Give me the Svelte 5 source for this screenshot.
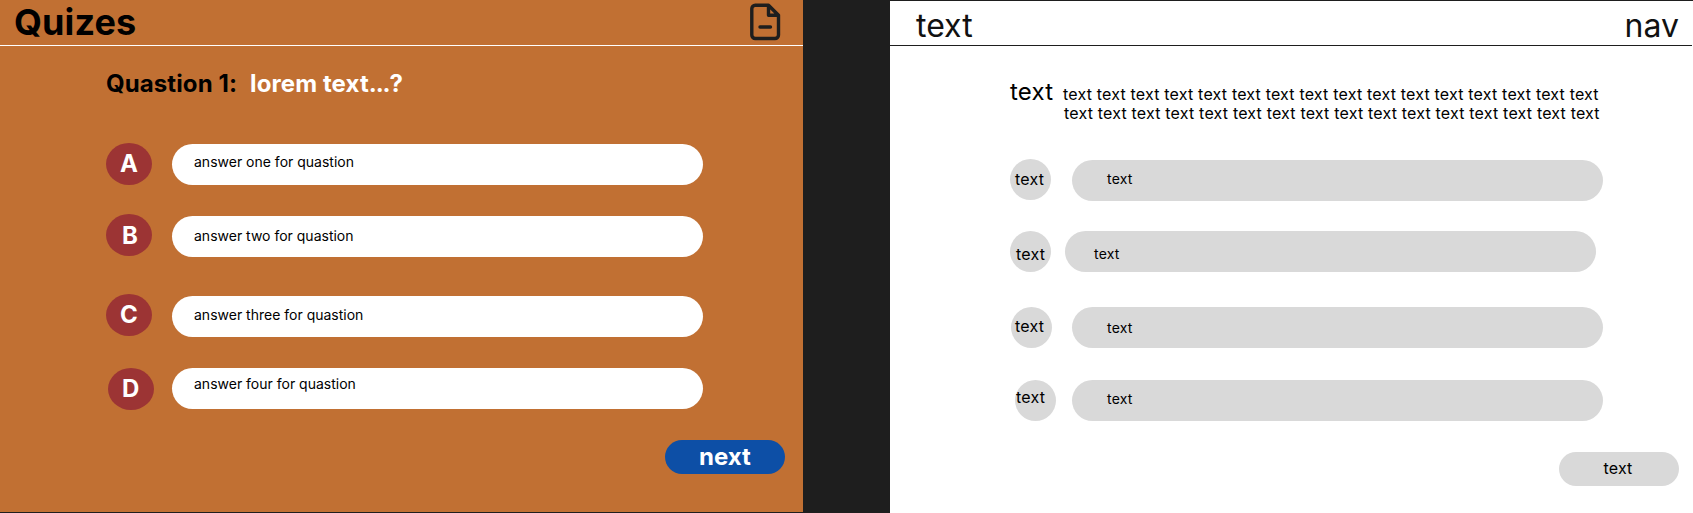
<script>
  const answers = [
    { letter: 'A', label: 'answer one for quastion' },
    { letter: 'B', label: 'answer two for quastion' },
    { letter: 'C', label: 'answer three for quastion' },
    { letter: 'D', label: 'answer four for quastion' }
  ];
  const line = Array(16).fill('text').join(' ');
</script>

<main>
  <section class="quiz">
    <header>
      <h1>Quizes</h1>
      <svg width="34" height="40" viewBox="0 0 34 40" fill="none" stroke="#1e1e1e" stroke-width="3.4" stroke-linecap="round" stroke-linejoin="round">
        <path d="M20.5 3.3H7.3a3.5 3.5 0 0 0-3.5 3.5V33a3.5 3.5 0 0 0 3.5 3.5H27A3.5 3.5 0 0 0 30.5 33V13.3L20.5 3.3V13.3H30.5M12 25H22.5" />
      </svg>
    </header>
    <h2><span>Quastion 1:</span><b>lorem text<span class="dots">...</span>?</b></h2>
    <ul>
      {#each answers as a}
        <li><span class="dot">{a.letter}</span><span class="pill">{a.label}</span></li>
      {/each}
    </ul>
    <button>next</button>
  </section>

  <section class="wire">
    <header><span>text</span><nav>nav</nav></header>
    <div class="ask">
      <span class="lead">text</span>
      <p>{line}<br /><span class="second">{line}</span></p>
    </div>
    <ul>
      {#each answers as a}
        <li><span class="dot">text</span><span class="pill">text</span></li>
      {/each}
    </ul>
    <button>text</button>
  </section>
</main>

<style>
  :global(body) { margin: 0; background: #1e1e1e; }
  main {
    display: flex;
    justify-content: space-between;
    height: 513px;
    overflow: hidden;
    font-family: Inter, sans-serif;
    color: #000;
  }
  section, header, li, .dot, .pill, button { box-sizing: border-box; }
  section { width: 803px; display: flex; flex-direction: column; }
  header { display: flex; justify-content: space-between; flex: none; }
  h1, h2, p, ul { margin: 0; padding: 0; }
  ul { list-style: none; }
  li { display: flex; align-items: flex-start; height: 41px; }
  .dot, .pill { flex: none; white-space: nowrap; }
  .pill { width: 531px; height: 41px; border-radius: 20.5px; font-size: 14px; line-height: 17px; }
  button {
    width: 120px; height: 34px; border: 0; border-radius: 17px; padding: 0;
    font-family: inherit; align-self: flex-end; flex: none;
  }

  .quiz { height: 512px; background: #c17033; }
  .quiz header { height: 46px; border-bottom: 1px solid #fff; padding: 0 21px 0 14px; }
  h1 { font-size: 36px; line-height: 44px; font-weight: 700; letter-spacing: 0.1px; }
  header svg { margin-top: 2px; }
  h2 { display: flex; gap: 13px; margin: 23px 0 0 106px; height: 29px; font-size: 24px; line-height: 29px; font-weight: 700; letter-spacing: 0.1px; }
  h2 b { color: #fff; font-weight: 700; }
  .dots { letter-spacing: -1.1px; }
  .quiz ul { margin: 46px 0 0 106px; }
  .quiz .dot {
    width: 46px; height: 42px; border-radius: 50%; background: #9c3434; color: #fff;
    font-size: 24px; line-height: 29px; font-weight: 700; padding: 6px 0 0 14px; margin-top: -1px;
  }
  .quiz .pill { background: #fff; margin-left: 20px; padding: 9px 0 0 22px; }
  .quiz li:nth-child(2) { margin-top: 31px; }
  .quiz li:nth-child(3) { margin-top: 39px; }
  .quiz li:nth-child(4) { margin-top: 31px; }
  .quiz li:nth-child(2) .dot { margin-top: -2px; padding: 7px 0 0 16px; }
  .quiz li:nth-child(3) .dot { margin-top: -2px; }
  .quiz li:nth-child(4) .dot { margin: 0 0 0 2px; }
  .quiz li:nth-child(2) .pill { padding-top: 11px; }
  .quiz li:nth-child(3) .pill { padding-top: 10px; }
  .quiz li:nth-child(4) .pill { margin-left: 18px; padding-top: 7px; }
  .quiz button { margin: 31px 18px 0 0; background: #0d4fa6; color: #fff; font-size: 24px; line-height: 29px; font-weight: 700; padding-bottom: 1px; }

  .wire { height: 512px; margin-top: 1px; background: #fff; }
  .wire header { height: 45px; border-bottom: 1px solid #1e1e1e; margin-right: 1px; padding: 5px 13px 0 26px; font-size: 32px; line-height: 39px; color: #111; }
  .ask { display: flex; margin: 31px 0 0 120px; height: 48px; letter-spacing: 0.19px; }
  .lead { font-size: 24px; line-height: 29px; width: 53px; }
  .ask p { font-size: 16px; line-height: 19px; white-space: nowrap; padding-top: 8px; }
  .second { margin-left: 1px; }
  .wire ul { margin: 35px 0 0 120px; letter-spacing: 0.19px; }
  .wire .dot {
    width: 41px; height: 41px; border-radius: 50%; background: #d9d9d9;
    font-size: 16px; line-height: 19px; padding: 11px 0 0 5px; margin-top: -1px;
  }
  .wire .pill { background: #d9d9d9; margin-left: 21px; padding: 10px 0 0 35px; }
  .wire li:nth-child(2) { margin-top: 30px; }
  .wire li:nth-child(3) { margin-top: 35px; }
  .wire li:nth-child(4) { margin-top: 32px; }
  .wire li:nth-child(n+2) .dot { margin-top: 0; }
  .wire li:nth-child(2) .dot { padding: 14px 0 0 6px; }
  .wire li:nth-child(2) .pill { margin-left: 14px; padding: 14px 0 0 29px; }
  .wire li:nth-child(3) .dot { margin-left: 1px; padding: 10px 0 0 4px; }
  .wire li:nth-child(3) .pill { margin-left: 20px; padding-top: 12px; }
  .wire li:nth-child(4) .dot { margin-left: 5px; padding: 8px 0 0 1px; }
  .wire li:nth-child(4) .pill { margin-left: 16px; padding-top: 10px; }
  .wire button { margin: 31px 14px 0 0; background: #d9d9d9; color: #000; font-size: 16px; line-height: 19px; padding: 0 2px 1px 0; letter-spacing: 0.19px; }
</style>
